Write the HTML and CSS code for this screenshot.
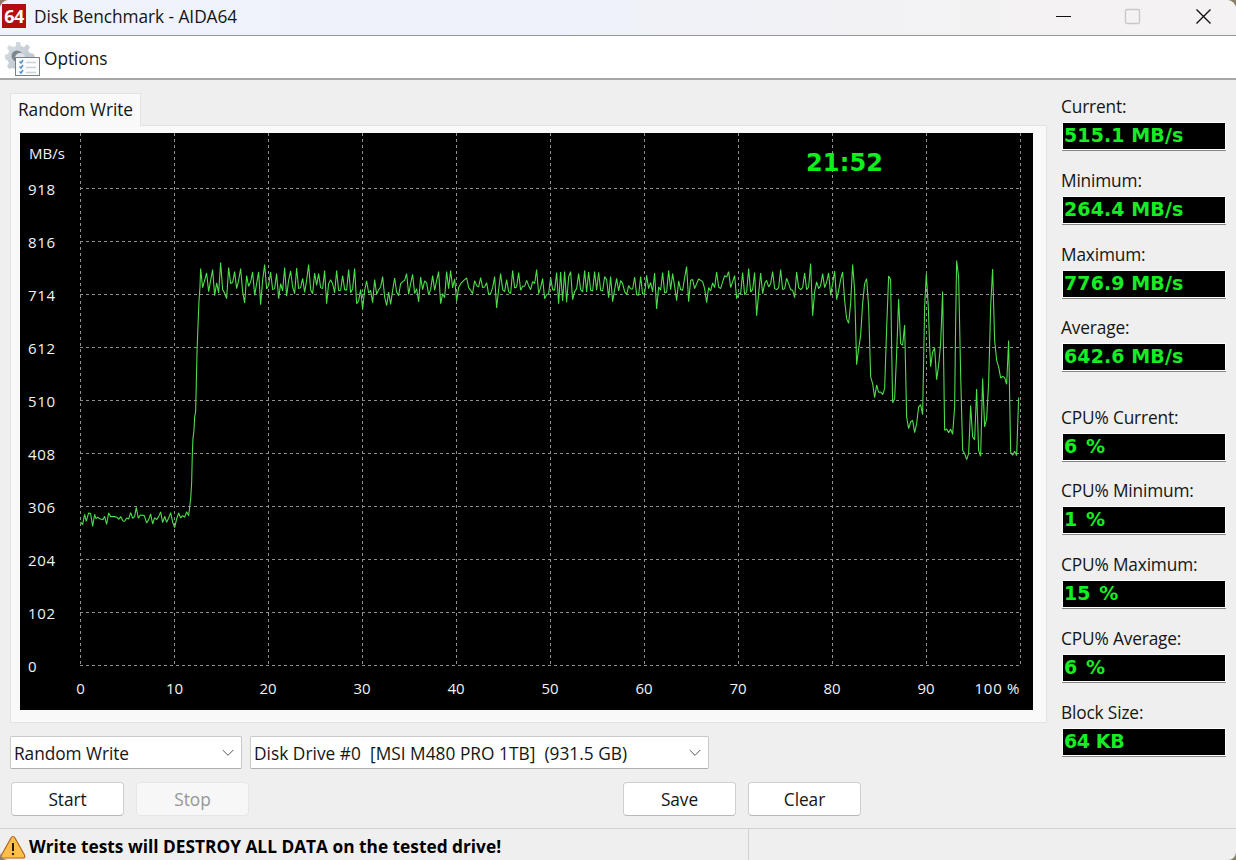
FILE: index.html
```
<!DOCTYPE html>
<html lang="en">
<head>
<meta charset="utf-8">
<title>Disk Benchmark - AIDA64</title>
<link rel="stylesheet" href="styles.css">
</head>
<body>
<div class="window">
  <header class="titlebar">
    <span class="app-icon">64</span>
    <span class="title">Disk Benchmark - AIDA64</span>
    <svg class="window-controls" width="180" height="35" viewBox="0 0 180 35" fill="none">
      <path d="M0 16.500h15" stroke="#111" stroke-width="1.200"/>
      <rect x="69.500" y="9.500" width="14" height="14" rx="1.500" stroke="#c9c7c8" stroke-width="1.300"/>
      <path d="M140.500 9.500l14 14m0-14l-14 14" stroke="#111" stroke-width="1.400"/>
    </svg>
  </header>
  <nav class="menubar">
    <svg class="options-icon" width="36" height="36" viewBox="0 0 36 36">
      <defs>
        <linearGradient id="gear" x1="0" y1="0" x2="1" y2="1">
          <stop offset="0" stop-color="#dbe1e5"/><stop offset="1" stop-color="#b3bdc5"/>
        </linearGradient>
      </defs>
      <path fill="url(#gear)" d="M11 1h4l1 4 3 1 3-3 3 3-2 4 2 2 4 1 1 4-4 1-1 4 2 3-3 4-4-2-3 2-2 3h-3l-1-4-4-1-3 1-2-3 2-3-2-3-3-1v-4l4-1 1-3-2-3 2-3 4 2 3-1z"/>
      <circle cx="12" cy="15" r="5.500" fill="#7c8790"/>
      <circle cx="15" cy="17" r="5" fill="#dfe4e8"/>
      <rect x="10.500" y="16.500" width="24" height="18" fill="#fbfcfd" stroke="#7b8085"/>
      <path d="M21 21.500h10M21 26.500h10M21 31.500h10" stroke="#cdd2d6" stroke-width="1.300"/>
      <path d="M14.500 20.500l1.500 1.500 2-3M14.500 25.500l1.500 1.500 2-3M14.500 30.500l1.500 1.500 2-3" fill="none" stroke="#4e91cf" stroke-width="1.500"/>
    </svg>
    <span class="menu-item">Options</span>
  </nav>
  <main class="content">
    <section class="left">
      <div class="tab">Random Write</div>
      <div class="panel">
        <svg class="chart" width="1013" height="577" viewBox="20 133 1013 577">
          <rect x="20" y="133" width="1013" height="577" fill="#000"/>
          <g class="grid">
            <path d="M80 188.500H1020M80 241.500H1020M80 294.500H1020M80 347.500H1020M80 400.500H1020M80 453.500H1020M80 506.500H1020M80 559.500H1020M80 612.500H1020M80 665.500H1020"/>
            <path d="M80.500 133V666M174.500 133V666M268.500 133V666M362.500 133V666M456.500 133V666M550.500 133V666M644.500 133V666M738.500 133V666M832.500 133V666M926.500 133V666M1020.500 133V666"/>
          </g>
          <g class="axis">
            <text x="29" y="159" textLength="36">MB/s</text>
            <text x="28" y="195" textLength="27">918</text>
            <text x="28" y="248" textLength="27">816</text>
            <text x="28" y="301" textLength="27">714</text>
            <text x="28" y="354" textLength="27">612</text>
            <text x="28" y="407" textLength="27">510</text>
            <text x="28" y="460" textLength="27">408</text>
            <text x="28" y="513" textLength="27">306</text>
            <text x="28" y="566" textLength="27">204</text>
            <text x="28" y="619" textLength="27">102</text>
            <text x="28" y="672">0</text>
          </g>
          <g class="axis middle">
            <text x="80.500" y="694">0</text>
            <text x="174.500" y="694">10</text>
            <text x="268" y="694">20</text>
            <text x="362" y="694">30</text>
            <text x="456" y="694">40</text>
            <text x="550" y="694">50</text>
            <text x="644" y="694">60</text>
            <text x="738" y="694">70</text>
            <text x="832" y="694">80</text>
            <text x="926" y="694">90</text>
            <text x="997" y="694" textLength="45">100 %</text>
          </g>
          <text class="clock" x="806" y="171" textLength="77">21:52</text>
          <g class="trace">
            <polyline transform="translate(70.300 240.300) scale(.33333)" points="31,845 37,853 43,822 48,843 55,818 61,820 67,858 73,822 77,835 82,831 90,836 98,838 103,828 109,852 115,818 121,829 133,829 140,831 146,837 151,829 158,842 163,843 169,833 175,836 181,817 187,834 193,829 198,801 204,834 210,824 222,826 229,848 235,838 241,821 247,851 253,832 259,838 265,829 271,815 277,847 283,828 289,846 295,834 301,817 307,845 313,862 319,836 325,818 331,833 337,826 343,831 349,814 355,826 361,777 364,728 366,645 368,595 371,570 373,530 376,515 378,430 380,340 383,258 386,183 389,140 391,85 397,142 403,120 409,98 415,154 421,120 427,88 433,166 439,128 445,158 451,67 457,148 463,158 469,175 475,82 481,130 487,126 493,94 499,145 505,120 511,85 517,154 523,188 529,106 535,138 541,125 547,95 553,165 559,130 565,95 571,193 577,120 583,73 589,146 595,135 601,95 607,148 613,145 619,100 625,175 631,130 637,152 643,82 649,168 655,120 661,92 667,140 673,160 679,83 685,145 691,142 697,114 703,156 709,120 715,73 721,148 727,160 733,98 739,135 745,100 751,142 757,145 763,91 769,190 775,130 781,118 787,130 793,158 799,91 805,151"/>
            <polyline transform="translate(330.300 240.300) scale(.33333)" points="25,151 31,150 37,106 43,148 49,150 55,88 61,157 67,145 73,85 79,190 85,182 91,148 97,207 103,150 109,122 115,158 121,150 127,187 133,118 139,162 145,148 151,140 157,109 163,170 169,196 175,155 181,192 187,150 193,113 199,155 205,166 211,130 217,124 223,120 229,100 235,162 241,130 247,102 253,160 259,145 265,185 271,110 277,148 283,122 289,128 295,163 301,148 307,106 313,150 319,120 325,94 331,190 337,160 343,172 349,94 355,145 361,91 367,143 373,116 379,182 385,142 391,130 397,124 403,118 409,113 415,142 421,150 427,160 433,121 439,136 445,140 451,112 457,142 463,140 469,127 475,162 481,160 487,142 493,109 499,203 505,148 511,100 517,148 523,154 529,118 535,154 541,160 547,91 553,143 559,140 565,97 571,150 577,138 583,138 589,120 595,136 601,148 607,124 613,130 619,88 625,160 631,142 637,115 643,175 649,163 655,160 661,112 667,148 673,150 679,97 685,190 691,95 697,182 703,94 709,186 715,110 721,94 727,178 733,154 739,145 745,100 751,148 757,155 763,91 769,155 775,95 781,150 787,152 793,94 799,150 805,97"/>
            <polyline transform="translate(590.300 240.300) scale(.33333)" points="25,97 31,150 37,152 43,109 49,118 55,172 61,109 67,184 73,148 79,114 85,152 91,121 97,130 103,154 109,163 115,136 121,146 127,146 133,110 139,163 145,165 151,109 157,162 163,160 169,105 175,145 181,126 187,155 193,98 199,206 205,140 211,150 217,97 223,158 229,155 235,91 241,148 247,100 253,138 259,181 265,122 271,148 277,150 283,112 289,79 295,184 301,120 307,118 313,145 325,116 337,124 343,145 349,187 355,142 361,152 367,128 373,142 379,95 385,140 391,145 397,125 403,106 409,110 415,94 421,142 433,106 439,175 445,160 451,160 457,97 463,163 469,155 475,85 481,155 487,148 493,97 499,226 505,160 511,98 517,160 523,130 529,120 535,140 541,130 547,94 553,145 559,148 565,142 571,88 577,148 583,145 589,114 595,130 601,148 607,150 613,172 619,95 625,142 631,148 637,142 643,98 649,148 655,140 661,70 667,226 673,155 679,125 685,145 691,136 697,100 703,142 709,125 715,98 721,165 727,130"/>
            <polyline transform="translate(800.300 240.300) scale(.33333)" points="97,130 103,92 109,178 115,150 121,118 127,95 133,180 139,235 145,249 151,190 157,73 163,150 169,373 175,325 181,285 187,190 193,130 199,115 205,200 211,410 217,430 223,472 229,434 235,456 241,455 247,463 253,445 259,265 265,107 271,118 274,320 277,487 283,475 289,340 295,176 301,310 307,315 313,254 319,530 325,565 331,545 337,540 343,577 349,550 355,500 361,493 367,523 373,200 378,101 384,200 388,315 391,379 397,335 403,323 409,418 415,375 421,310 427,154 433,570 439,566 445,577 451,566 457,582 463,500 466,250 469,61 475,110 481,400 487,630 493,640 499,658 505,640 511,496 517,590 523,598 529,446 535,630 541,648 547,415 553,560 559,535 565,430 571,200 577,86 583,300 589,360 595,380 601,413 607,408 613,412 619,432 625,301 631,635 637,645 643,633 649,646 655,472"/>
          </g>
        </svg>
      </div>
      <div class="selects">
        <div class="select select-test"><span class="select-text">Random Write</span><svg width="12" height="8" viewBox="0 0 12 8"><path d="M.7 1l5.300 5.300L11.300 1" fill="none" stroke="#555"/></svg></div>
        <div class="select select-drive"><span class="select-text">Disk Drive #0&nbsp; [MSI M480 PRO 1TB]&nbsp; (931.5 GB)</span><svg width="12" height="8" viewBox="0 0 12 8"><path d="M.7 1l5.300 5.300L11.300 1" fill="none" stroke="#555"/></svg></div>
      </div>
      <div class="buttons">
        <button class="btn">Start</button>
        <button class="btn" disabled>Stop</button>
        <button class="btn btn-save">Save</button>
        <button class="btn">Clear</button>
      </div>
    </section>
    <aside class="stats">
      <div class="stat"><span class="label">Current:</span><span class="value">515.1 MB/s</span></div>
      <div class="stat"><span class="label">Minimum:</span><span class="value">264.4 MB/s</span></div>
      <div class="stat"><span class="label">Maximum:</span><span class="value">776.9 MB/s</span></div>
      <div class="stat"><span class="label">Average:</span><span class="value">642.6 MB/s</span></div>
      <div class="stat cpu"><span class="label">CPU% Current:</span><span class="value percent">6 %</span></div>
      <div class="stat"><span class="label">CPU% Minimum:</span><span class="value percent">1 %</span></div>
      <div class="stat"><span class="label">CPU% Maximum:</span><span class="value percent">15 %</span></div>
      <div class="stat"><span class="label">CPU% Average:</span><span class="value percent">6 %</span></div>
      <div class="stat"><span class="label">Block Size:</span><span class="value block">64 KB</span></div>
    </aside>
  </main>
  <footer class="statusbar">
    <div class="status-main">
      <svg width="26" height="24" viewBox="0 0 26 24">
        <path d="M13 1.500c1 0 1.500.6 2 1.500l9.500 17c.8 1.600 0 3-1.500 3H3c-1.500 0-2.300-1.400-1.500-3L11 3c.5-.9 1-1.500 2-1.500z" fill="#fcc04a" stroke="#b5651d" stroke-width="1.200"/>
        <path d="M13 8v8" stroke="#2b1a08" stroke-width="2"/><circle cx="13" cy="19" r="1.200" fill="#2b1a08"/>
      </svg>
      <span class="warning">Write tests will DESTROY ALL DATA on the tested drive!</span>
    </div>
  </footer>
</div>
</body>
</html>
```
FILE: styles.css
```
* { box-sizing: border-box; }
body {
  margin: 0;
  background: #8b8066;
  color: #151515;
  font: 17.3px/24px "Open Sans", "Noto Sans", sans-serif;
  letter-spacing: -0.05px;
}
.window {
  display: flex;
  flex-direction: column;
  width: 1236px;
  height: 860px;
  overflow: hidden;
  background: #efefef;
  border-radius: 9px 9px 8px 8px;
  white-space: nowrap;
}
.titlebar {
  display: flex;
  align-items: center;
  height: 36px;
  padding-left: 2px;
  background: linear-gradient(90deg, #eff3fb 0%, #eff2fa 45%, #f4f2f2 85%);
  border-bottom: 1px solid #969696;
}
.app-icon {
  width: 24px;
  height: 24px;
  margin: -4px 8px 0 0;
  background: #b30d0d;
  color: #fff;
  font: bold 18px/24px "Open Sans", sans-serif;
  letter-spacing: -0.5px;
  text-align: center;
}
.title { margin-top: -2px; }
.window-controls { margin-left: auto; }
.menubar {
  display: flex;
  align-items: center;
  height: 44px;
  padding: 3px 0 0 5px;
  background: #fff;
  border-bottom: 2px solid #a6a6a6;
}
.options-icon { margin-right: 3px; }
.menu-item { margin-top: 1px; }
.content { display: flex; height: 748px; }
.left {
  display: flex;
  flex-direction: column;
  width: 1047px;
  padding: 13px 0 0 10px;
}
.tab {
  z-index: 1;
  width: 131px;
  height: 33px;
  margin-bottom: -1px;
  padding: 4px 7px;
  background: #f9f9f9;
  border: 1px solid #e3e3e3;
  border-bottom: 0;
}
.panel {
  height: 598px;
  padding: 7px 0 0 9px;
  background: #f9f9f9;
  border: 1px solid #e3e3e3;
}
.chart { display: block; }
.grid { fill: none; stroke: #8f8f8f; stroke-dasharray: 3 3; }
.axis { fill: #f2f2f2; font-size: 15px; letter-spacing: 0; }
.middle { text-anchor: middle; }
.clock { fill: #0cf01c; font: bold 24px "DejaVu Sans", sans-serif; letter-spacing: 0; }
.trace polyline { fill: none; stroke: #4edc4c; stroke-width: 3.3; stroke-linejoin: bevel; }
.selects { display: flex; gap: 8px; margin-top: 13px; }
.select {
  display: flex;
  align-items: center;
  justify-content: space-between;
  height: 33px;
  padding: 0 7px 0 3px;
  background: #fff;
  border: 1px solid #c9c9c9;
  border-bottom-color: #adadad;
  border-radius: 2px;
}
.select-text { padding-top: 2px; }
.select-test { width: 232px; }
.select-drive { width: 459px; letter-spacing: 0.03px; }
.buttons { display: flex; gap: 12px; margin-top: 13px; padding-left: 1px; }
.btn {
  width: 113px;
  height: 34px;
  padding: 2px 0 0;
  background: #fff;
  border: 1px solid #cfcfcf;
  border-bottom-color: #b8b8b8;
  border-radius: 4px;
  color: inherit;
  font: inherit;
  letter-spacing: inherit;
}
.btn:disabled { background: #f7f7f7; border-color: #e6e6e6; color: #969696; }
.btn-save { margin-left: 362px; }
.stats { width: 165px; margin-left: 14px; padding-top: 15px; }
.stat { height: 73.8px; }
.cpu { margin-top: 15.400px; }
.label, .value { display: block; }
.label { height: 27px; letter-spacing: -0.15px; }
.value {
  height: 28px;
  margin-left: 1px;
  padding-left: 1px;
  background: #000;
  border: 1px solid #fff;
  color: #14ee22;
  font: bold 19px/25px "DejaVu Sans", sans-serif;
  letter-spacing: 0.1px;
  box-shadow: 0 1px #858585;
}
.percent { word-spacing: 2px; }
.block { letter-spacing: -0.4px; }
.statusbar { height: 32px; border-top: 1px solid #d2d2d2; }
.status-main {
  display: flex;
  align-items: center;
  width: 749px;
  height: 31px;
  padding-top: 4px;
  border-right: 1px solid #d2d2d2;
}
.warning { margin-left: 3px; color: #000; font-weight: bold; letter-spacing: 0; }
```
